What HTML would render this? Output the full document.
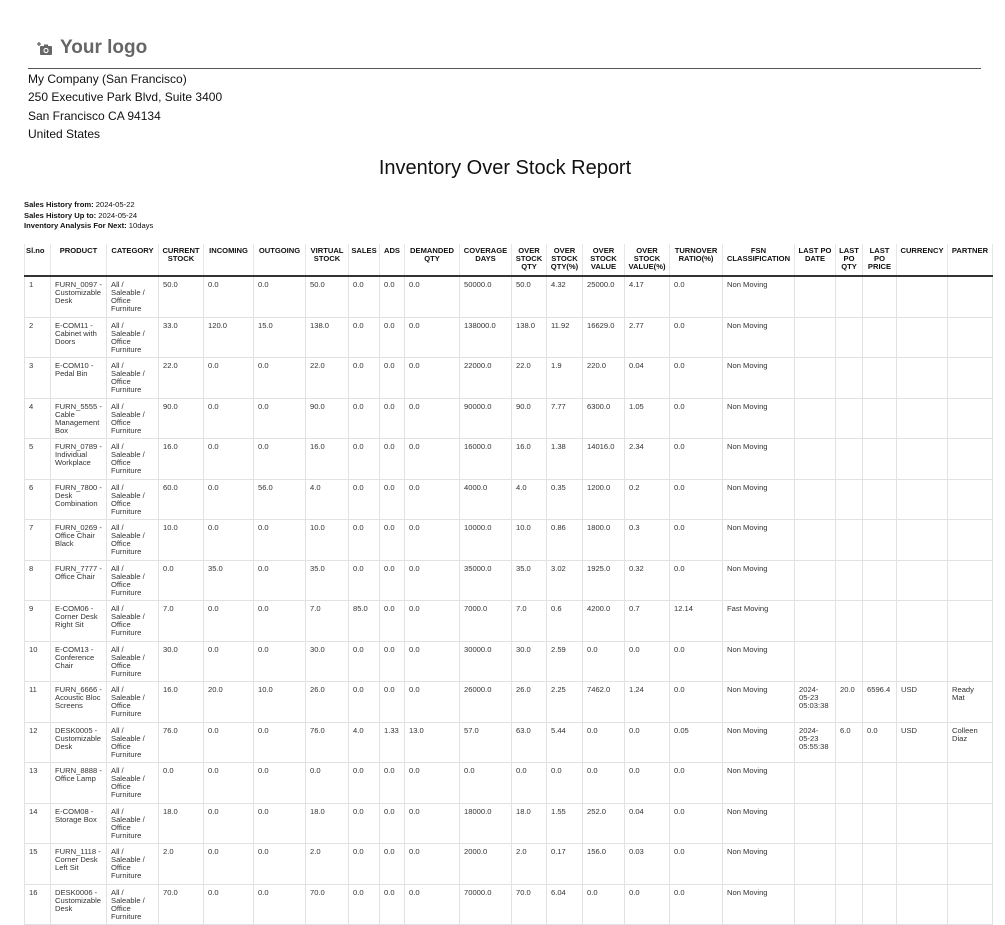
<!DOCTYPE html>
<html><head><meta charset="utf-8"><style>
body{margin:0;background:#fff;font-family:"Liberation Sans",sans-serif;color:#222;width:1005px;height:918px;overflow:hidden;position:relative}
.logo{position:absolute;left:37px;top:37px;font-size:19px;font-weight:bold;color:#666;display:flex;align-items:center}
.hr{position:absolute;left:28px;top:68px;width:953px;height:1px;background:#555}
.addr{position:absolute;left:28px;top:70px;font-size:12px;line-height:18.4px;color:#111}
h1{position:absolute;left:0;width:1010px;top:157px;margin:0;text-align:center;font-size:20px;font-weight:normal;color:#111}
.info{position:absolute;left:24px;top:200px;font-size:7.6px;line-height:10.5px;color:#111}
.info b{font-weight:bold}
table{position:absolute;left:24px;top:244px;border-collapse:collapse;table-layout:fixed;width:968px;font-size:7.6px;line-height:8px}
th{font-weight:bold;text-align:center;vertical-align:top;padding:3px 1px 3px;border-left:1px solid #e6e6e6;border-right:1px solid #e6e6e6;border-bottom:2px solid #333;height:25px;color:#111}
th:first-child{text-align:left}
td{vertical-align:top;padding:4px 4px 0;border:1px solid #e2e2e2;height:35.5px;color:#333;overflow:hidden;white-space:normal}
</style></head><body>
<div class="logo"><svg width="16" height="15" viewBox="0 0 16 15"><path d="M2 1v4M0 3h4" stroke="#666" stroke-width="1.3"/><rect x="3" y="5" width="12" height="9" rx="1" fill="#666"/><rect x="7" y="3.5" width="4" height="2" fill="#666"/><circle cx="9" cy="9.5" r="2.6" fill="#fff"/><circle cx="9" cy="9.5" r="1.5" fill="#666"/></svg><span style="margin-left:7px">Your logo</span></div>
<div class="hr"></div>
<div class="addr">My Company (San Francisco)<br>250 Executive Park Blvd, Suite 3400<br>San Francisco CA 94134<br>United States</div>
<h1>Inventory Over Stock Report</h1>
<div class="info"><b>Sales History from:</b> 2024-05-22<br><b>Sales History Up to:</b> 2024-05-24<br><b>Inventory Analysis For Next:</b> 10days</div>
<table>
<colgroup><col style="width:26px"><col style="width:56px"><col style="width:52px"><col style="width:45px"><col style="width:50px"><col style="width:52px"><col style="width:43px"><col style="width:31px"><col style="width:25px"><col style="width:55px"><col style="width:52px"><col style="width:35px"><col style="width:36px"><col style="width:42px"><col style="width:45px"><col style="width:53px"><col style="width:72px"><col style="width:41px"><col style="width:27px"><col style="width:34px"><col style="width:51px"><col style="width:45px"></colgroup>
<tr><th>Sl.no</th><th>PRODUCT</th><th>CATEGORY</th><th>CURRENT STOCK</th><th>INCOMING</th><th>OUTGOING</th><th>VIRTUAL STOCK</th><th>SALES</th><th>ADS</th><th>DEMANDED QTY</th><th>COVERAGE DAYS</th><th>OVER STOCK QTY</th><th>OVER STOCK QTY(%)</th><th>OVER STOCK VALUE</th><th>OVER STOCK VALUE(%)</th><th>TURNOVER RATIO(%)</th><th>FSN CLASSIFICATION</th><th>LAST PO DATE</th><th>LAST PO QTY</th><th>LAST PO PRICE</th><th>CURRENCY</th><th>PARTNER</th></tr>
<tr><td>1</td><td>FURN_0097 - Customizable Desk</td><td>All /<br>Saleable /<br>Office<br>Furniture</td><td>50.0</td><td>0.0</td><td>0.0</td><td>50.0</td><td>0.0</td><td>0.0</td><td>0.0</td><td>50000.0</td><td>50.0</td><td>4.32</td><td>25000.0</td><td>4.17</td><td>0.0</td><td>Non Moving</td><td></td><td></td><td></td><td></td><td></td></tr>
<tr><td>2</td><td>E-COM11 - Cabinet with Doors</td><td>All /<br>Saleable /<br>Office<br>Furniture</td><td>33.0</td><td>120.0</td><td>15.0</td><td>138.0</td><td>0.0</td><td>0.0</td><td>0.0</td><td>138000.0</td><td>138.0</td><td>11.92</td><td>16629.0</td><td>2.77</td><td>0.0</td><td>Non Moving</td><td></td><td></td><td></td><td></td><td></td></tr>
<tr><td>3</td><td>E-COM10 - Pedal Bin</td><td>All /<br>Saleable /<br>Office<br>Furniture</td><td>22.0</td><td>0.0</td><td>0.0</td><td>22.0</td><td>0.0</td><td>0.0</td><td>0.0</td><td>22000.0</td><td>22.0</td><td>1.9</td><td>220.0</td><td>0.04</td><td>0.0</td><td>Non Moving</td><td></td><td></td><td></td><td></td><td></td></tr>
<tr><td>4</td><td>FURN_5555 - Cable Management Box</td><td>All /<br>Saleable /<br>Office<br>Furniture</td><td>90.0</td><td>0.0</td><td>0.0</td><td>90.0</td><td>0.0</td><td>0.0</td><td>0.0</td><td>90000.0</td><td>90.0</td><td>7.77</td><td>6300.0</td><td>1.05</td><td>0.0</td><td>Non Moving</td><td></td><td></td><td></td><td></td><td></td></tr>
<tr><td>5</td><td>FURN_0789 - Individual Workplace</td><td>All /<br>Saleable /<br>Office<br>Furniture</td><td>16.0</td><td>0.0</td><td>0.0</td><td>16.0</td><td>0.0</td><td>0.0</td><td>0.0</td><td>16000.0</td><td>16.0</td><td>1.38</td><td>14016.0</td><td>2.34</td><td>0.0</td><td>Non Moving</td><td></td><td></td><td></td><td></td><td></td></tr>
<tr><td>6</td><td>FURN_7800 - Desk Combination</td><td>All /<br>Saleable /<br>Office<br>Furniture</td><td>60.0</td><td>0.0</td><td>56.0</td><td>4.0</td><td>0.0</td><td>0.0</td><td>0.0</td><td>4000.0</td><td>4.0</td><td>0.35</td><td>1200.0</td><td>0.2</td><td>0.0</td><td>Non Moving</td><td></td><td></td><td></td><td></td><td></td></tr>
<tr><td>7</td><td>FURN_0269 - Office Chair Black</td><td>All /<br>Saleable /<br>Office<br>Furniture</td><td>10.0</td><td>0.0</td><td>0.0</td><td>10.0</td><td>0.0</td><td>0.0</td><td>0.0</td><td>10000.0</td><td>10.0</td><td>0.86</td><td>1800.0</td><td>0.3</td><td>0.0</td><td>Non Moving</td><td></td><td></td><td></td><td></td><td></td></tr>
<tr><td>8</td><td>FURN_7777 - Office Chair</td><td>All /<br>Saleable /<br>Office<br>Furniture</td><td>0.0</td><td>35.0</td><td>0.0</td><td>35.0</td><td>0.0</td><td>0.0</td><td>0.0</td><td>35000.0</td><td>35.0</td><td>3.02</td><td>1925.0</td><td>0.32</td><td>0.0</td><td>Non Moving</td><td></td><td></td><td></td><td></td><td></td></tr>
<tr><td>9</td><td>E-COM06 - Corner Desk Right Sit</td><td>All /<br>Saleable /<br>Office<br>Furniture</td><td>7.0</td><td>0.0</td><td>0.0</td><td>7.0</td><td>85.0</td><td>0.0</td><td>0.0</td><td>7000.0</td><td>7.0</td><td>0.6</td><td>4200.0</td><td>0.7</td><td>12.14</td><td>Fast Moving</td><td></td><td></td><td></td><td></td><td></td></tr>
<tr><td>10</td><td>E-COM13 - Conference Chair</td><td>All /<br>Saleable /<br>Office<br>Furniture</td><td>30.0</td><td>0.0</td><td>0.0</td><td>30.0</td><td>0.0</td><td>0.0</td><td>0.0</td><td>30000.0</td><td>30.0</td><td>2.59</td><td>0.0</td><td>0.0</td><td>0.0</td><td>Non Moving</td><td></td><td></td><td></td><td></td><td></td></tr>
<tr><td>11</td><td>FURN_6666 - Acoustic Bloc Screens</td><td>All /<br>Saleable /<br>Office<br>Furniture</td><td>16.0</td><td>20.0</td><td>10.0</td><td>26.0</td><td>0.0</td><td>0.0</td><td>0.0</td><td>26000.0</td><td>26.0</td><td>2.25</td><td>7462.0</td><td>1.24</td><td>0.0</td><td>Non Moving</td><td>2024-<br>05-23<br>05:03:38</td><td>20.0</td><td>6596.4</td><td>USD</td><td>Ready<br>Mat</td></tr>
<tr><td>12</td><td>DESK0005 - Customizable Desk</td><td>All /<br>Saleable /<br>Office<br>Furniture</td><td>76.0</td><td>0.0</td><td>0.0</td><td>76.0</td><td>4.0</td><td>1.33</td><td>13.0</td><td>57.0</td><td>63.0</td><td>5.44</td><td>0.0</td><td>0.0</td><td>0.05</td><td>Non Moving</td><td>2024-<br>05-23<br>05:55:38</td><td>6.0</td><td>0.0</td><td>USD</td><td>Colleen<br>Diaz</td></tr>
<tr><td>13</td><td>FURN_8888 - Office Lamp</td><td>All /<br>Saleable /<br>Office<br>Furniture</td><td>0.0</td><td>0.0</td><td>0.0</td><td>0.0</td><td>0.0</td><td>0.0</td><td>0.0</td><td>0.0</td><td>0.0</td><td>0.0</td><td>0.0</td><td>0.0</td><td>0.0</td><td>Non Moving</td><td></td><td></td><td></td><td></td><td></td></tr>
<tr><td>14</td><td>E-COM08 - Storage Box</td><td>All /<br>Saleable /<br>Office<br>Furniture</td><td>18.0</td><td>0.0</td><td>0.0</td><td>18.0</td><td>0.0</td><td>0.0</td><td>0.0</td><td>18000.0</td><td>18.0</td><td>1.55</td><td>252.0</td><td>0.04</td><td>0.0</td><td>Non Moving</td><td></td><td></td><td></td><td></td><td></td></tr>
<tr><td>15</td><td>FURN_1118 - Corner Desk Left Sit</td><td>All /<br>Saleable /<br>Office<br>Furniture</td><td>2.0</td><td>0.0</td><td>0.0</td><td>2.0</td><td>0.0</td><td>0.0</td><td>0.0</td><td>2000.0</td><td>2.0</td><td>0.17</td><td>156.0</td><td>0.03</td><td>0.0</td><td>Non Moving</td><td></td><td></td><td></td><td></td><td></td></tr>
<tr><td>16</td><td>DESK0006 - Customizable Desk</td><td>All /<br>Saleable /<br>Office<br>Furniture</td><td>70.0</td><td>0.0</td><td>0.0</td><td>70.0</td><td>0.0</td><td>0.0</td><td>0.0</td><td>70000.0</td><td>70.0</td><td>6.04</td><td>0.0</td><td>0.0</td><td>0.0</td><td>Non Moving</td><td></td><td></td><td></td><td></td><td></td></tr>
</table>
</body></html>
